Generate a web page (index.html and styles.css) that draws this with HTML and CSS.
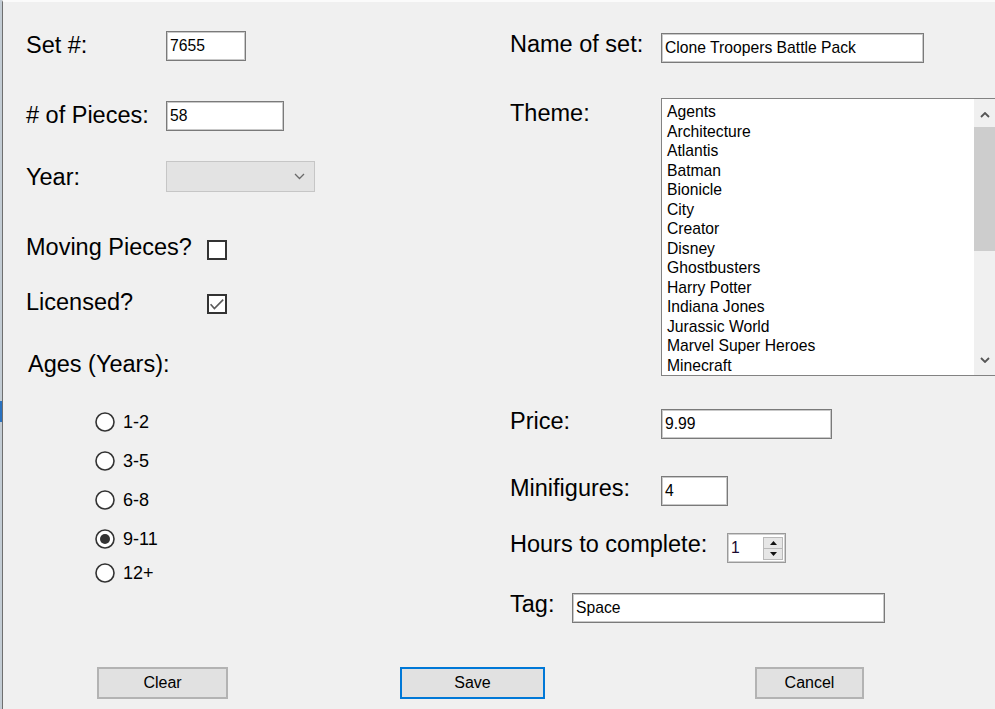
FILE: index.html
```html
<!DOCTYPE html>
<html lang="en">
<head>
<meta charset="utf-8">
<title>Lego Set</title>
<link rel="stylesheet" href="styles.css">
</head>
<body>
<div class="window">
  <div class="columns">
    <section class="col col-left">
      <div class="row row-set">
        <span class="lbl w140 nudge-d1">Set #:</span>
        <span class="textbox tb-set">7655</span>
      </div>
      <div class="row row-pieces">
        <span class="lbl w140 nudge-d1">#&nbsp;of Pieces:</span>
        <span class="textbox tb-pieces">58</span>
      </div>
      <div class="row row-year">
        <span class="lbl w140 nudge-d3">Year:</span>
        <span class="combo">
          <svg class="chev" width="11" height="7" viewBox="0 0 11 7"><path d="M1 1 L5.5 5.5 L10 1" fill="none" stroke="#6a6a6a" stroke-width="1.3"/></svg>
        </span>
      </div>
      <div class="row row-moving">
        <span class="lbl w181">Moving Pieces?</span>
        <svg class="checkbox" width="20" height="20" viewBox="0 0 20 20"><rect x="1" y="1" width="18" height="18" fill="#fff" stroke="#333" stroke-width="2"/></svg>
      </div>
      <div class="row row-licensed">
        <span class="lbl w181 nudge-d1">Licensed?</span>
        <svg class="checkbox" width="20" height="20" viewBox="0 0 20 20"><rect x="1" y="1" width="18" height="18" fill="#fff" stroke="#333" stroke-width="2"/><path d="M3.6 10.2 L7.4 14.6 L16.2 5.6" fill="none" stroke="#5a5a5a" stroke-width="1.6"/></svg>
      </div>
      <div class="row row-ages">
        <span class="lbl ages">Ages (Years):</span>
      </div>
      <div class="radios">
        <div class="radio r-first"><svg width="20" height="20" viewBox="0 0 20 20"><circle cx="10" cy="10" r="9" fill="#fff" stroke="#333" stroke-width="1.6"/></svg><span>1-2</span></div>
        <div class="radio r-gap"><svg width="20" height="20" viewBox="0 0 20 20"><circle cx="10" cy="10" r="9" fill="#fff" stroke="#333" stroke-width="1.6"/></svg><span>3-5</span></div>
        <div class="radio r-gap"><svg width="20" height="20" viewBox="0 0 20 20"><circle cx="10" cy="10" r="9" fill="#fff" stroke="#333" stroke-width="1.6"/></svg><span>6-8</span></div>
        <div class="radio r-gap"><svg width="20" height="20" viewBox="0 0 20 20"><circle cx="10" cy="10" r="9" fill="#fff" stroke="#333" stroke-width="1.6"/><circle cx="10" cy="10" r="5" fill="#333"/></svg><span>9-11</span></div>
        <div class="radio r-last"><svg width="20" height="20" viewBox="0 0 20 20"><circle cx="10" cy="10" r="9" fill="#fff" stroke="#333" stroke-width="1.6"/></svg><span>12+</span></div>
      </div>
    </section>

    <section class="col col-right">
      <div class="row row-name">
        <span class="lbl w151 nudge-u2">Name of set:</span>
        <span class="textbox tb-name">Clone Troopers Battle Pack</span>
      </div>
      <div class="row row-theme">
        <span class="lbl w151 nudge-d2">Theme:</span>
        <div class="listbox">
          <ul class="items">
            <li>Agents</li>
            <li>Architecture</li>
            <li>Atlantis</li>
            <li>Batman</li>
            <li>Bionicle</li>
            <li>City</li>
            <li>Creator</li>
            <li>Disney</li>
            <li>Ghostbusters</li>
            <li>Harry Potter</li>
            <li>Indiana Jones</li>
            <li>Jurassic World</li>
            <li>Marvel Super Heroes</li>
            <li>Minecraft</li>
          </ul>
          <div class="scrollbar">
            <div class="sb-btn sb-up"><svg width="10" height="6" viewBox="0 0 10 6"><path d="M1 5 L5 1 L9 5" fill="none" stroke="#555" stroke-width="1.8"/></svg></div>
            <div class="sb-thumb"></div>
            <div class="sb-track"></div>
            <div class="sb-btn sb-down"><svg width="10" height="6" viewBox="0 0 10 6"><path d="M1 1 L5 5 L9 1" fill="none" stroke="#555" stroke-width="1.8"/></svg></div>
          </div>
        </div>
      </div>
      <div class="row row-price">
        <span class="lbl w151 nudge-u1">Price:</span>
        <span class="textbox tb-price">9.99</span>
      </div>
      <div class="row row-minifig">
        <span class="lbl w151 nudge-u1">Minifigures:</span>
        <span class="textbox tb-minifig">4</span>
      </div>
      <div class="row row-hours">
        <span class="lbl w217 nudge-u2">Hours to complete:</span>
        <span class="numeric">
          <span class="num-val">1</span>
          <span class="spin">
            <span class="spin-btn"><svg width="7" height="4" viewBox="0 0 7 4"><polygon points="0,4 3.5,0 7,4" fill="#111"/></svg></span>
            <span class="spin-btn"><svg width="7" height="4" viewBox="0 0 7 4"><polygon points="0,0 7,0 3.5,4" fill="#111"/></svg></span>
          </span>
        </span>
      </div>
      <div class="row row-tag">
        <span class="lbl w62 nudge-u2">Tag:</span>
        <span class="textbox tb-tag">Space</span>
      </div>
    </section>
  </div>

  <div class="buttons">
    <button class="btn btn-clear" type="button">Clear</button>
    <button class="btn btn-save" type="button">Save</button>
    <button class="btn btn-cancel" type="button">Cancel</button>
  </div>
</div>
</body>
</html>
```

FILE: styles.css
```css
* { box-sizing: border-box; }

html, body {
  margin: 0;
  padding: 0;
  overflow: hidden;
}

body {
  width: 995px;
  height: 709px;
  padding-left: 2px;
  background: linear-gradient(to bottom, #c3ccd4 0, #c3ccd4 401px, #2a72c0 401px, #2a72c0 422px, #c3ccd4 422px);
  font-family: "Liberation Sans", Arial, sans-serif;
  color: #000;
}

.window {
  height: 709px;
  background: #f0f0f0;
  border-left: 1px solid #6f6f6f;
  border-top: 2px solid #fbfbfb;
}

.columns {
  display: grid;
  grid-template-columns: 507px 1fr;
  align-items: start;
}

.col {
  display: flex;
  flex-direction: column;
  align-items: flex-start;
}

.col-left { padding-left: 23px; }

.row {
  display: flex;
  align-items: flex-start;
}

.lbl {
  flex: none;
  font-size: 23.5px;
  line-height: 26px;
  white-space: nowrap;
}

.w140 { width: 140px; }
.w181 { width: 181px; }
.w151 { width: 151px; }
.w217 { width: 217px; }
.w62 { width: 62px; }

.nudge-d1 { margin-top: 1px; }
.nudge-d2 { margin-top: 2px; }
.nudge-d3 { margin-top: 3px; }
.nudge-u1 { margin-top: -1px; }
.nudge-u2 { margin-top: -2px; }

/* left column vertical rhythm */
.row-set { margin-top: 29px; }
.row-pieces { margin-top: 40px; }
.row-year { margin-top: 30px; }
.row-moving { margin-top: 42px; }
.row-licensed { margin-top: 28px; }
.row-ages { margin-top: 36px; }

.ages { margin-left: 2px; }

.checkbox {
  flex: none;
  margin-top: 6px;
  display: block;
}

/* text boxes */
.textbox {
  flex: none;
  display: flex;
  align-items: center;
  height: 30px;
  padding-left: 3px;
  background: #fff;
  border: 1px solid #7a7a7a;
  box-shadow: inset 0 0 0 1px #c9c9c9;
  font-size: 15.7px;
  white-space: nowrap;
  overflow: hidden;
}

.tb-set { width: 80px; }
.tb-pieces { width: 118px; }
.tb-name { width: 263px; }
.tb-price { width: 171px; }
.tb-minifig { width: 67px; }
.tb-tag { width: 313px; }

.combo {
  flex: none;
  width: 149px;
  height: 31px;
  display: flex;
  align-items: center;
  justify-content: flex-end;
  padding-right: 9px;
  background: #e3e3e3;
  border: 1px solid #c6c6c6;
}

.chev { display: block; }

/* radio buttons */
.radios {
  display: flex;
  flex-direction: column;
  margin-left: 69px;
}

.radio {
  display: flex;
  align-items: center;
  height: 24px;
  font-size: 18px;
  line-height: 24px;
}

.radio svg {
  display: block;
  flex: none;
  margin-right: 8px;
}

.r-first { margin-top: 33px; }
.r-gap { margin-top: 15px; }
.r-last { margin-top: 10px; }

/* right column vertical rhythm */
.row-name { margin-top: 31px; }
.row-theme { margin-top: 35px; }
.row-price { margin-top: 33px; }
.row-minifig { margin-top: 37px; }
.row-hours { margin-top: 27px; }
.row-tag { margin-top: 30px; }

/* list box */
.listbox {
  flex: none;
  width: 335px;
  height: 278px;
  display: flex;
  background: #fff;
  border: 1px solid #828282;
}

.items {
  flex: 1;
  margin: 0;
  list-style: none;
  padding: 3px 0 0 5px;
  overflow: hidden;
  font-size: 15.7px;
  line-height: 19.5px;
  white-space: nowrap;
}

.scrollbar {
  flex: none;
  width: 21px;
  display: flex;
  flex-direction: column;
  background: #f0f0f0;
}

.sb-btn {
  height: 28px;
  display: flex;
  align-items: center;
  justify-content: center;
}

.sb-btn svg { display: block; }

.sb-up { padding-top: 4px; }
.sb-down { padding-bottom: 2px; }

.sb-thumb {
  height: 124px;
  background: #cdcdcd;
}

.sb-track { flex: 1; }

/* numeric up/down */
.numeric {
  flex: none;
  width: 59px;
  height: 30px;
  display: flex;
  align-items: center;
  padding: 2px 2px 2px 3px;
  background: #fff;
  border: 1px solid #9a9a9a;
  box-shadow: inset 0 0 0 1px #d0d0d0;
  font-size: 15.7px;
}

.num-val {
  flex: 1;
  color: #1a0a30;
}

.spin {
  flex: none;
  width: 20px;
  height: 23px;
  display: flex;
  flex-direction: column;
}

.spin-btn {
  flex: 1;
  display: flex;
  align-items: center;
  justify-content: center;
  background: #e6e6e6;
  border: 1px solid #b9b9b9;
}

.spin-btn + .spin-btn { border-top: none; }

.spin-btn svg { display: block; }

/* buttons */
.buttons {
  display: flex;
  margin-top: 44px;
}

.btn {
  height: 32px;
  padding: 0;
  display: flex;
  align-items: center;
  justify-content: center;
  background: #e1e1e1;
  border: 2px solid #b3b3b3;
  font-family: "Liberation Sans", Arial, sans-serif;
  font-size: 16px;
  color: #000;
}

.btn-clear { margin-left: 94px; width: 131px; }
.btn-save { margin-left: 172px; width: 145px; border-color: #0078d7; }
.btn-cancel { margin-left: 210px; width: 109px; }
```
